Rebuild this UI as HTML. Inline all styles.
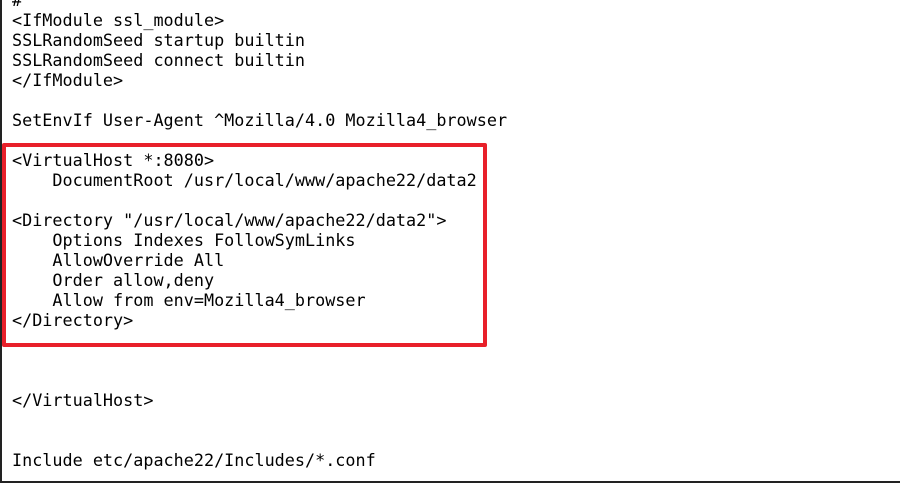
<!DOCTYPE html>
<html><head><style>
html,body{margin:0;padding:0;background:#fff;}
body{width:900px;height:483px;position:relative;overflow:hidden;}
pre{position:absolute;left:12px;top:-10px;margin:0;font-family:"DejaVu Sans Mono","Liberation Mono",monospace;font-size:16.8px;line-height:20px;color:#000;}
.lb{position:absolute;left:0;top:0;width:2px;height:483px;background:#222;}
.bb{position:absolute;left:0;top:481px;width:900px;height:2px;background:#222;}
.box{position:absolute;left:2px;top:143px;width:477px;height:196px;border:4px solid #e8202a;border-radius:2px;}
</style></head><body>
<div class="lb"></div><div class="bb"></div>
<pre>#
&lt;IfModule ssl_module&gt;
SSLRandomSeed startup builtin
SSLRandomSeed connect builtin
&lt;/IfModule&gt;

SetEnvIf User-Agent ^Mozilla/4.0 Mozilla4_browser

&lt;VirtualHost *:8080&gt;
    DocumentRoot /usr/local/www/apache22/data2

&lt;Directory "/usr/local/www/apache22/data2"&gt;
    Options Indexes FollowSymLinks
    AllowOverride All
    Order allow,deny
    Allow from env=Mozilla4_browser
&lt;/Directory&gt;



&lt;/VirtualHost&gt;


Include etc/apache22/Includes/*.conf</pre>
<div class="box"></div>
</body></html>
